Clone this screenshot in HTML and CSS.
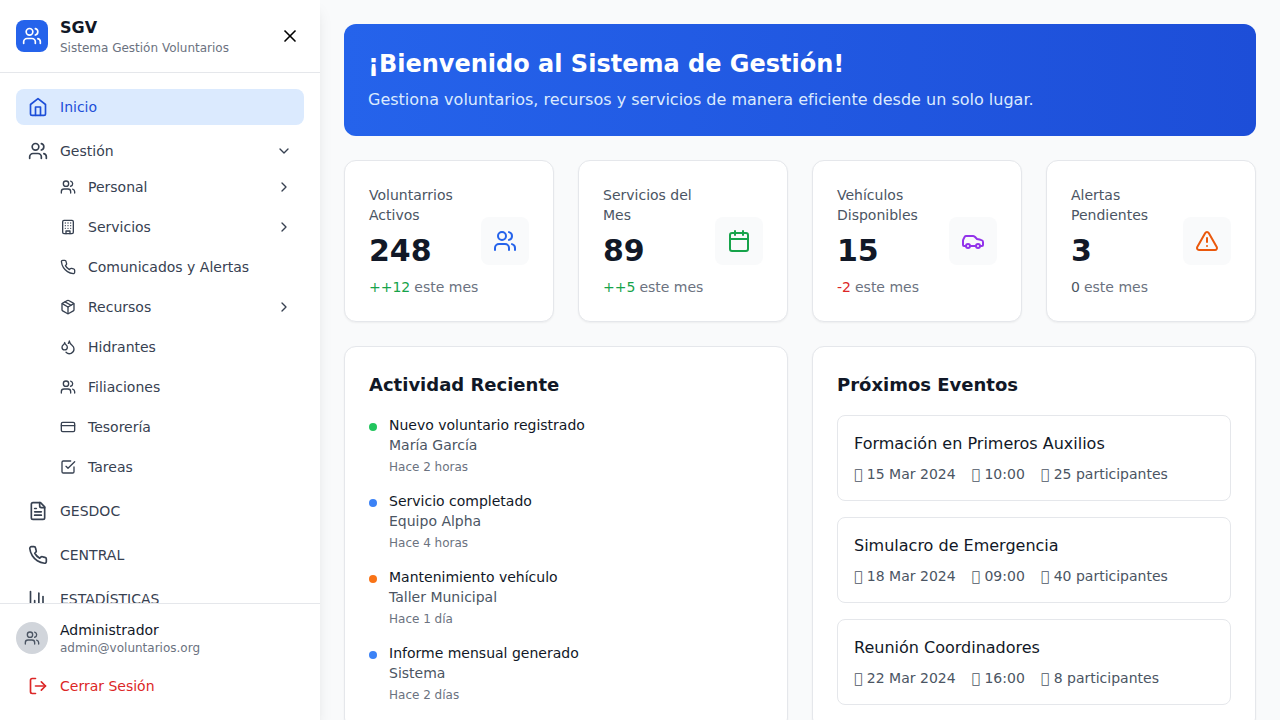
FILE: index.html
```html
<!DOCTYPE html>
<html lang="es">
<head>
<meta charset="utf-8">
<title>SGV - Sistema Gestión Voluntarios</title>
<link rel="stylesheet" href="styles.css">
</head>
<body>
<svg class="sprite" aria-hidden="true">
  <symbol id="users" viewBox="0 0 24 24"><path d="M16 21v-2a4 4 0 0 0-4-4H6a4 4 0 0 0-4 4v2"/><circle cx="9" cy="7" r="4"/><path d="M22 21v-2a4 4 0 0 0-3-3.87"/><path d="M16 3.13a4 4 0 0 1 0 7.75"/></symbol>
  <symbol id="close" viewBox="0 0 24 24"><path d="M18 6 6 18"/><path d="m6 6 12 12"/></symbol>
  <symbol id="home" viewBox="0 0 24 24"><path d="m3 9 9-7 9 7v11a2 2 0 0 1-2 2H5a2 2 0 0 1-2-2z"/><path d="M9 22V12h6v10"/></symbol>
  <symbol id="chevron-down" viewBox="0 0 24 24"><path d="m6 9 6 6 6-6"/></symbol>
  <symbol id="chevron-right" viewBox="0 0 24 24"><path d="m9 18 6-6-6-6"/></symbol>
  <symbol id="building" viewBox="0 0 24 24"><rect width="16" height="20" x="4" y="2" rx="2" ry="2"/><path d="M9 22v-4h6v4"/><path d="M8 6h.01"/><path d="M16 6h.01"/><path d="M12 6h.01"/><path d="M12 10h.01"/><path d="M12 14h.01"/><path d="M16 10h.01"/><path d="M16 14h.01"/><path d="M8 10h.01"/><path d="M8 14h.01"/></symbol>
  <symbol id="phone" viewBox="0 0 24 24"><path d="M22 16.92v3a2 2 0 0 1-2.18 2 19.79 19.79 0 0 1-8.63-3.07 19.5 19.5 0 0 1-6-6 19.79 19.79 0 0 1-3.07-8.67A2 2 0 0 1 4.11 2h3a2 2 0 0 1 2 1.72 12.84 12.84 0 0 0 .7 2.81 2 2 0 0 1-.45 2.11L8.09 9.91a16 16 0 0 0 6 6l1.27-1.27a2 2 0 0 1 2.11-.45 12.84 12.84 0 0 0 2.81.7A2 2 0 0 1 22 16.92z"/></symbol>
  <symbol id="package" viewBox="0 0 24 24"><path d="m7.5 4.27 9 5.15"/><path d="M21 8a2 2 0 0 0-1-1.73l-7-4a2 2 0 0 0-2 0l-7 4A2 2 0 0 0 3 8v8a2 2 0 0 0 1 1.73l7 4a2 2 0 0 0 2 0l7-4A2 2 0 0 0 21 16Z"/><path d="m3.3 7 8.7 5 8.7-5"/><path d="M12 22V12"/></symbol>
  <symbol id="droplets" viewBox="0 0 24 24"><path d="M7 16.3c2.2 0 4-1.83 4-4.05 0-1.16-.57-2.26-1.71-3.19S7.29 6.75 7 5.3c-.29 1.45-1.14 2.84-2.29 3.76S3 11.1 3 12.25c0 2.22 1.8 4.05 4 4.05z"/><path d="M12.56 6.6A10.97 10.97 0 0 0 14 3.02c.5 2.5 2 4.9 4 6.5s3 3.5 3 5.5a6.98 6.98 0 0 1-11.91 4.97"/></symbol>
  <symbol id="card" viewBox="0 0 24 24"><rect width="20" height="14" x="2" y="5" rx="2"/><path d="M2 10h20"/></symbol>
  <symbol id="check" viewBox="0 0 24 24"><path d="m9 11 3 3L22 4"/><path d="M21 12v7a2 2 0 0 1-2 2H5a2 2 0 0 1-2-2V5a2 2 0 0 1 2-2h11"/></symbol>
  <symbol id="file" viewBox="0 0 24 24"><path d="M15 2H6a2 2 0 0 0-2 2v16a2 2 0 0 0 2 2h12a2 2 0 0 0 2-2V7Z"/><path d="M14 2v4a2 2 0 0 0 2 2h4"/><path d="M10 9H8"/><path d="M16 13H8"/><path d="M16 17H8"/></symbol>
  <symbol id="chart" viewBox="0 0 24 24"><path d="M3 3v18h18"/><path d="M18 17V9"/><path d="M13 17V5"/><path d="M8 17v-3"/></symbol>
  <symbol id="logout" viewBox="0 0 24 24"><path d="M9 21H5a2 2 0 0 1-2-2V5a2 2 0 0 1 2-2h4"/><path d="m16 17 5-5-5-5"/><path d="M21 12H9"/></symbol>
  <symbol id="calendar" viewBox="0 0 24 24"><path d="M8 2v4"/><path d="M16 2v4"/><rect width="18" height="18" x="3" y="4" rx="2"/><path d="M3 10h18"/></symbol>
  <symbol id="car" viewBox="0 0 24 24"><path d="M19 17h2c.6 0 1-.4 1-1v-3c0-.9-.7-1.7-1.5-1.9C18.7 10.6 16 10 16 10s-1.3-1.4-2.2-2.3c-.5-.4-1.1-.7-1.8-.7H5c-.6 0-1.1.4-1.4.9l-1.4 2.9A3.7 3.7 0 0 0 2 12v4c0 .6.4 1 1 1h2"/><circle cx="7" cy="17" r="2"/><path d="M9 17h6"/><circle cx="17" cy="17" r="2"/></symbol>
  <symbol id="alert" viewBox="0 0 24 24"><path d="m21.73 18-8-14a2 2 0 0 0-3.48 0l-8 14A2 2 0 0 0 4 21h16a2 2 0 0 0 1.73-3Z"/><path d="M12 9v4"/><path d="M12 17h.01"/></symbol>
</svg>
<div class="app">
  <aside class="sidebar">
    <header class="brand">
      <div class="logo"><svg class="icon md"><use href="#users"/></svg></div>
      <div class="grow">
        <h1 class="brand-name">SGV</h1>
        <p class="small">Sistema Gestión Voluntarios</p>
      </div>
      <button class="close" aria-label="Cerrar menú"><svg class="icon md"><use href="#close"/></svg></button>
    </header>
    <nav class="nav">
      <a class="item active"><svg class="icon md"><use href="#home"/></svg><span class="grow">Inicio</span></a>
      <div>
        <a class="item"><svg class="icon md"><use href="#users"/></svg><span class="grow">Gestión</span><svg class="icon sm"><use href="#chevron-down"/></svg></a>
        <div class="subnav">
          <a class="item"><svg class="icon sm"><use href="#users"/></svg><span class="grow">Personal</span><svg class="icon sm"><use href="#chevron-right"/></svg></a>
          <a class="item"><svg class="icon sm"><use href="#building"/></svg><span class="grow">Servicios</span><svg class="icon sm"><use href="#chevron-right"/></svg></a>
          <a class="item"><svg class="icon sm"><use href="#phone"/></svg><span class="grow">Comunicados y Alertas</span></a>
          <a class="item"><svg class="icon sm"><use href="#package"/></svg><span class="grow">Recursos</span><svg class="icon sm"><use href="#chevron-right"/></svg></a>
          <a class="item"><svg class="icon sm"><use href="#droplets"/></svg><span class="grow">Hidrantes</span></a>
          <a class="item"><svg class="icon sm"><use href="#users"/></svg><span class="grow">Filiaciones</span></a>
          <a class="item"><svg class="icon sm"><use href="#card"/></svg><span class="grow">Tesorería</span></a>
          <a class="item"><svg class="icon sm"><use href="#check"/></svg><span class="grow">Tareas</span></a>
        </div>
      </div>
      <a class="item"><svg class="icon md"><use href="#file"/></svg><span class="grow">GESDOC</span></a>
      <a class="item"><svg class="icon md"><use href="#phone"/></svg><span class="grow">CENTRAL</span></a>
      <a class="item"><svg class="icon md"><use href="#chart"/></svg><span class="grow">ESTADÍSTICAS</span></a>
    </nav>
    <footer class="account">
      <div class="user">
        <div class="avatar"><svg class="icon sm"><use href="#users"/></svg></div>
        <div>
          <p class="user-name">Administrador</p>
          <p class="small">admin@voluntarios.org</p>
        </div>
      </div>
      <a class="item logout"><svg class="icon md"><use href="#logout"/></svg><span>Cerrar Sesión</span></a>
    </footer>
  </aside>

  <main class="main">
    <section class="banner">
      <h2>¡Bienvenido al Sistema de Gestión!</h2>
      <p>Gestiona voluntarios, recursos y servicios de manera eficiente desde un solo lugar.</p>
    </section>

    <section class="stats">
      <article class="card stat">
        <div><p class="label">Voluntarrios Activos</p><p class="value">248</p><p class="change"><span class="up">++12</span><span>este mes</span></p></div>
        <div class="tile blue"><svg class="icon lg"><use href="#users"/></svg></div>
      </article>
      <article class="card stat">
        <div><p class="label">Servicios del Mes</p><p class="value">89</p><p class="change"><span class="up">++5</span><span>este mes</span></p></div>
        <div class="tile green"><svg class="icon lg"><use href="#calendar"/></svg></div>
      </article>
      <article class="card stat">
        <div><p class="label">Vehículos Disponibles</p><p class="value">15</p><p class="change"><span class="down">-2</span><span>este mes</span></p></div>
        <div class="tile purple"><svg class="icon lg"><use href="#car"/></svg></div>
      </article>
      <article class="card stat">
        <div><p class="label">Alertas Pendientes</p><p class="value">3</p><p class="change"><span class="same">0</span><span>este mes</span></p></div>
        <div class="tile orange"><svg class="icon lg"><use href="#alert"/></svg></div>
      </article>
    </section>

    <section class="panels">
      <article class="card">
        <h3>Actividad Reciente</h3>
        <div class="list">
          <div class="activity"><i class="dot dot-green"></i><div><p class="title">Nuevo voluntario registrado</p><p class="who">María García</p><p class="small when">Hace 2 horas</p></div></div>
          <div class="activity"><i class="dot dot-blue"></i><div><p class="title">Servicio completado</p><p class="who">Equipo Alpha</p><p class="small when">Hace 4 horas</p></div></div>
          <div class="activity"><i class="dot dot-orange"></i><div><p class="title">Mantenimiento vehículo</p><p class="who">Taller Municipal</p><p class="small when">Hace 1 día</p></div></div>
          <div class="activity"><i class="dot dot-blue"></i><div><p class="title">Informe mensual generado</p><p class="who">Sistema</p><p class="small when">Hace 2 días</p></div></div>
        </div>
      </article>
      <article class="card">
        <h3>Próximos Eventos</h3>
        <div class="list">
          <div class="event"><h4>Formación en Primeros Auxilios</h4><div class="meta"><span>&#xF0001; 15 Mar 2024</span><span>&#xF0001; 10:00</span><span>&#xF0001; 25 participantes</span></div></div>
          <div class="event"><h4>Simulacro de Emergencia</h4><div class="meta"><span>&#xF0001; 18 Mar 2024</span><span>&#xF0001; 09:00</span><span>&#xF0001; 40 participantes</span></div></div>
          <div class="event"><h4>Reunión Coordinadores</h4><div class="meta"><span>&#xF0001; 22 Mar 2024</span><span>&#xF0001; 16:00</span><span>&#xF0001; 8 participantes</span></div></div>
        </div>
      </article>
    </section>
  </main>
</div>
</body>
</html>
```
FILE: styles.css
```css
* { box-sizing: border-box; }

body, h1, h2, h3, h4, p { margin: 0; }

body {
  font-family: "DejaVu Sans", sans-serif;
  font-size: 14px;
  line-height: 20px;
  color: #111827;
  background: #f9fafb;
}

.sprite { display: none; }

.icon {
  display: block;
  flex-shrink: 0;
  fill: none;
  stroke: currentColor;
  stroke-width: 2;
  stroke-linecap: round;
  stroke-linejoin: round;
}
.sm { width: 16px; height: 16px; }
.md { width: 20px; height: 20px; }
.lg { width: 24px; height: 24px; }

.grow { flex: 1; }
.small { font-size: 12px; line-height: 16px; color: #6b7280; }

.app { display: flex; height: 100vh; overflow: hidden; }

/* Sidebar */
.sidebar {
  display: flex;
  flex-direction: column;
  flex: 0 0 320px;
  background: #fff;
  box-shadow: 0 10px 15px -3px rgba(0, 0, 0, .1), 0 4px 6px -4px rgba(0, 0, 0, .1);
}
.brand {
  display: flex;
  align-items: center;
  gap: 12px;
  padding: 16px;
  border-bottom: 1px solid #e5e7eb;
}
.brand-name { font-size: 16px; line-height: 24px; font-weight: 700; }
.logo, .avatar {
  display: flex;
  align-items: center;
  justify-content: center;
  width: 32px;
  height: 32px;
}
.logo { border-radius: 8px; background: #2563eb; color: #fff; }
.close { padding: 4px; border: 0; background: none; color: #000; }

.nav {
  display: flex;
  flex-direction: column;
  gap: 8px;
  flex: 1;
  min-height: 0;
  padding: 16px;
  overflow-y: auto;
  scrollbar-width: none;
}
.item {
  display: flex;
  align-items: center;
  gap: 12px;
  flex-shrink: 0;
  padding: 8px 12px;
  border-radius: 8px;
  color: #374151;
}
.active { background: #dbeafe; color: #1d4ed8; }
.subnav { display: flex; flex-direction: column; gap: 4px; padding-left: 32px; }

.account { padding: 16px; border-top: 1px solid #e5e7eb; }
.user { display: flex; align-items: center; gap: 12px; margin-bottom: 12px; }
.avatar { border-radius: 50%; background: #d1d5db; color: #4b5563; }
.logout { color: #dc2626; }

/* Content */
.main {
  display: flex;
  flex-direction: column;
  gap: 24px;
  flex: 1;
  min-width: 0;
  padding: 24px;
  overflow: hidden;
}
.banner {
  padding: 24px;
  border-radius: 12px;
  color: #fff;
  background: linear-gradient(to right, #2563eb, #1d4ed8);
}
.banner h2 { margin-bottom: 8px; font-size: 24px; line-height: 32px; font-weight: 700; }
.banner p { font-size: 16px; line-height: 24px; color: #dbeafe; }

.card {
  padding: 24px;
  border: 1px solid #e5e7eb;
  border-radius: 12px;
  background: #fff;
  box-shadow: 0 1px 2px rgba(0, 0, 0, .05);
}
.stats { display: grid; grid-template-columns: repeat(4, 1fr); gap: 24px; }
.stat { display: flex; align-items: center; justify-content: space-between; }
.label { max-width: 100px; color: #4b5563; }
.value { margin: 8px 0; font-size: 30px; line-height: 36px; font-weight: 700; }
.change { display: flex; gap: 4px; color: #6b7280; white-space: nowrap; }
.stat > div:first-child { width: 112px; }
.up { color: #16a34a; }
.down { color: #dc2626; }
.same { color: #4b5563; }
.tile { flex-shrink: 0; padding: 12px; border-radius: 8px; background: #f9fafb; }
.blue { color: #2563eb; }
.green { color: #16a34a; }
.purple { color: #9333ea; }
.orange { color: #ea580c; }

.panels { display: grid; grid-template-columns: repeat(2, 1fr); gap: 24px; }
h3 { margin-bottom: 16px; font-size: 18px; line-height: 28px; font-weight: 600; }
.list { display: flex; flex-direction: column; gap: 16px; }
.activity { display: flex; align-items: flex-start; gap: 12px; }
.dot { width: 8px; height: 8px; margin-top: 8px; border-radius: 50%; }
.dot-green { background: #22c55e; }
.dot-blue { background: #3b82f6; }
.dot-orange { background: #f97316; }
.who { color: #4b5563; }
.when { margin-top: 4px; }

.event { padding: 16px; border: 1px solid #e5e7eb; border-radius: 8px; }
.event h4 { margin-bottom: 8px; font-size: 16px; line-height: 24px; font-weight: 500; }
.meta { display: flex; gap: 16px; height: 20px; color: #4b5563; }
```
